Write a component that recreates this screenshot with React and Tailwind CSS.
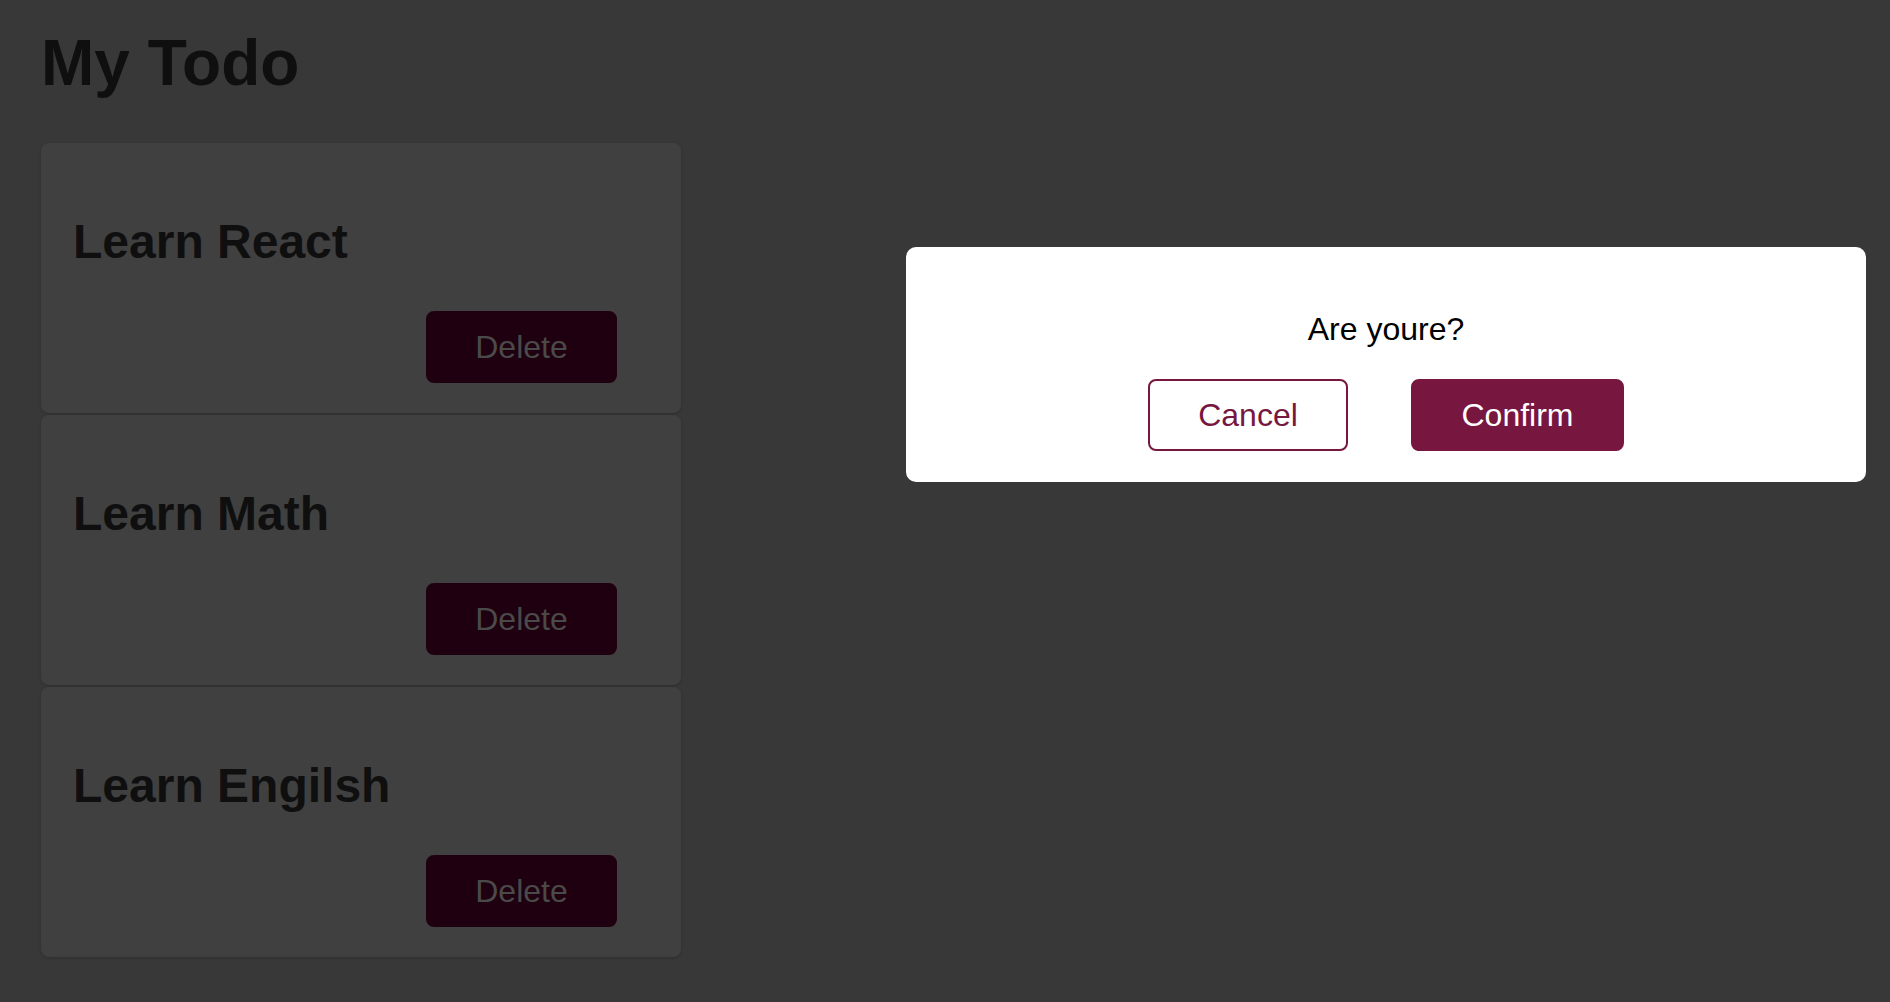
import { useState } from "react";

const todos = [
  { id: 1, title: "Learn React" },
  { id: 2, title: "Learn Math" },
  { id: 3, title: "Learn Engilsh" },
];

const btnBase =
  "h-[72px] px-[48px] rounded-[8px] border-2 text-[32px] leading-[37px] flex items-center justify-center";

function TodoCard({ title, onDelete }) {
  return (
    <div className="w-[640px] h-[270px] rounded-[8px] bg-[#404040] shadow-[0_1px_3px_rgba(0,0,0,0.18)] px-[32px] pt-[32px]">
      <h2 className="mt-[39px] mb-[42px] text-[48px] leading-[55px] font-bold text-[#0f0f0f]">
        {title}
      </h2>
      <div className="flex justify-end pr-[32px]">
        <button
          onClick={onDelete}
          className={`${btnBase} w-[191px] bg-[#1f0010] border-[#1f0010] text-[#4a4a4a]`}
        >
          Delete
        </button>
      </div>
    </div>
  );
}

function ConfirmModal({ onCancel, onConfirm }) {
  return (
    <div className="fixed left-[906px] top-[247px] w-[960px] h-[235px] bg-white rounded-[10px] flex flex-col items-center">
      <p className="mt-[64px] text-[32px] leading-[37px] text-black">Are youre?</p>
      <div className="mt-[31px] flex gap-[63px]">
        <button
          onClick={onCancel}
          className={`${btnBase} w-[200px] bg-white border-[#77163f] text-[#77163f]`}
        >
          Cancel
        </button>
        <button
          onClick={onConfirm}
          className={`${btnBase} w-[213px] bg-[#77163f] border-[#77163f] text-white`}
        >
          Confirm
        </button>
      </div>
    </div>
  );
}

export default function App() {
  const [open, setOpen] = useState(true);

  return (
    <div className="w-full h-[1002px] bg-[#383838] font-['Liberation_Sans',Arial,sans-serif] pl-[41px] overflow-hidden">
      <h1 className="pt-[26px] mb-[43px] text-[64px] leading-[74px] font-bold text-[#0f0f0f]">
        My Todo
      </h1>
      <div className="flex flex-col gap-[2px]">
        {todos.map((t) => (
          <TodoCard key={t.id} title={t.title} onDelete={() => setOpen(true)} />
        ))}
      </div>
      {open && (
        <ConfirmModal onCancel={() => setOpen(false)} onConfirm={() => setOpen(false)} />
      )}
    </div>
  );
}
